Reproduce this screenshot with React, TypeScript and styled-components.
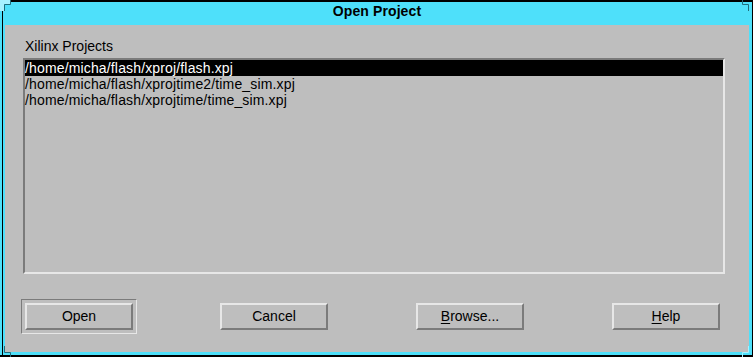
import React from "react";
import styled, { createGlobalStyle } from "styled-components";

const GlobalStyle = createGlobalStyle`
  html, body { margin: 0; padding: 0; background: #000; }
  body { font-family: "Liberation Sans", Arial, sans-serif; }
`;

const CYAN = "#4ee0fa";
const CYAN_LIGHT = "#a6f1ff";
const CYAN_DARK = "#1f6d7c";
const GRAY = "#bebebe";
const LIGHT = "#e7e7e7";
const DARK = "#7b7b7b";

const Window = styled.div`
  position: relative;
  box-sizing: border-box;
  width: 753px;
  height: 357px;
  background: ${CYAN};
  border-top: 2px solid #000;
  border-right: 1px solid #000;
  border-bottom: 2px solid #000;
  box-shadow: inset 2px 0 0 ${CYAN}, inset 3px 0 0 #000;
  padding: 0 3px 3px 5px;
  display: flex;
  flex-direction: column;
`;

const TitleBar = styled.div`
  height: 23px;
  box-sizing: border-box;
  padding-top: 1px;
  text-align: center;
  font-family: "Liberation Sans", Arial, sans-serif;
  font-weight: bold;
  font-size: 14px;
  line-height: 16px;
  letter-spacing: 0.1px;
  color: #000;
`;

const Corner = styled.svg<{ $pos: "tl" | "tr" | "bl" | "br" }>`
  position: absolute;
  width: 11px;
  height: 11px;
  ${(p) => (p.$pos[0] === "t" ? "top: -2px;" : "bottom: -2px;")}
  ${(p) => (p.$pos[1] === "l" ? "left: 0;" : "right: -1px;")}
`;

const Body = styled.div`
  flex: 1;
  background: ${GRAY};
  display: flex;
  flex-direction: column;
  padding: 13px 24px 22px 18px;
`;

const Label = styled.div`
  font-size: 14px;
  line-height: 16px;
  color: #000;
  padding-left: 2px;
  margin-bottom: 4px;
`;

const ListBox = styled.div`
  height: 216px;
  box-sizing: border-box;
  border-style: solid;
  border-width: 2px;
  border-color: ${DARK} ${LIGHT} ${LIGHT} ${DARK};
  background: ${GRAY};
  display: flex;
  flex-direction: column;
`;

const Row = styled.div<{ $selected?: boolean }>`
  height: 16px;
  font-size: 14px;
  line-height: 16px;
  letter-spacing: 0.15px;
  white-space: nowrap;
  background: ${(p) => (p.$selected ? "#000" : "transparent")};
  color: ${(p) => (p.$selected ? "#fff" : "#000")};
`;

const ButtonRow = styled.div`
  display: flex;
  gap: 88px;
  margin-top: 29px;
  padding-left: 2px;
`;

const DefaultRing = styled.div`
  display: flex;
  margin: -4px -5px -4px -4px;
  padding: 3px;
  border: 1px solid;
  border-color: ${DARK} ${LIGHT} ${LIGHT} ${DARK};
`;

const Button = styled.button`
  width: 108px;
  height: 27px;
  box-sizing: border-box;
  margin: 0;
  padding: 0 0 1px 0;
  background: ${GRAY};
  border-style: solid;
  border-width: 2px;
  border-color: ${LIGHT} ${DARK} ${DARK} ${LIGHT};
  font-family: "Liberation Sans", Arial, sans-serif;
  font-size: 14px;
  line-height: 16px;
  color: #000;
  text-align: center;
  cursor: default;
`;

const Mnemonic = styled.span`
  text-decoration: underline;
  text-underline-offset: 2px;
`;

const projects = [
  "/home/micha/flash/xproj/flash.xpj",
  "/home/micha/flash/xprojtime2/time_sim.xpj",
  "/home/micha/flash/xprojtime/time_sim.xpj",
];

export default function App() {
  return (
    <>
      <GlobalStyle />
      <Window>
        <Corner $pos="tl" viewBox="0 0 11 11">
          <rect x="0" y="0" width="11" height="4" fill={CYAN_LIGHT} />
          <rect x="0" y="0" width="4" height="11" fill={CYAN_LIGHT} />
          <path d="M10.5 0 V4.5 H4.5 V11" stroke={CYAN_DARK} fill="none" />
        </Corner>
        <Corner $pos="tr" viewBox="0 0 11 11">
          <path d="M0.5 0 V4.5 H6.5 V11" stroke={CYAN_DARK} fill="none" />
        </Corner>
        <Corner $pos="bl" viewBox="0 0 11 11">
          <path d="M4.5 0 V6.5 H10.5 V11" stroke={CYAN_DARK} fill="none" />
        </Corner>
        <Corner $pos="br" viewBox="0 0 11 11">
          <path d="M6.5 0 V6.5 H0.5 V11" stroke={CYAN_LIGHT} fill="none" />
        </Corner>
        <TitleBar>Open Project</TitleBar>
        <Body>
          <Label>Xilinx Projects</Label>
          <ListBox>
            {projects.map((p, i) => (
              <Row key={p} $selected={i === 0}>
                {p}
              </Row>
            ))}
          </ListBox>
          <ButtonRow>
            <DefaultRing>
              <Button>Open</Button>
            </DefaultRing>
            <Button>Cancel</Button>
            <Button>
              <Mnemonic>B</Mnemonic>rowse...
            </Button>
            <Button>
              <Mnemonic>H</Mnemonic>elp
            </Button>
          </ButtonRow>
        </Body>
      </Window>
    </>
  );
}
